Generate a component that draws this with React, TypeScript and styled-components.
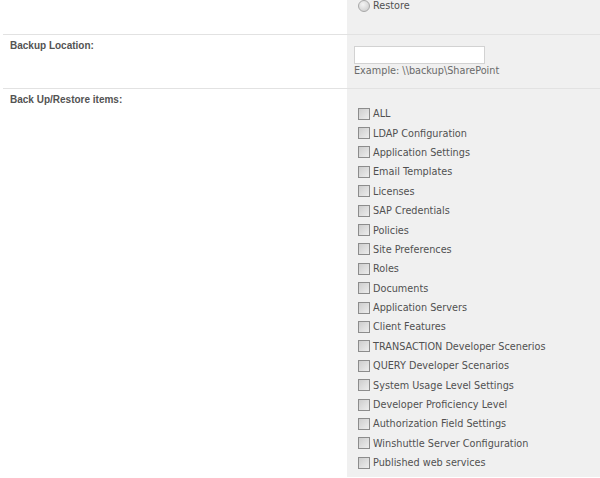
import styled, { createGlobalStyle } from "styled-components";

const ITEMS = [
  "ALL",
  "LDAP Configuration",
  "Application Settings",
  "Email Templates",
  "Licenses",
  "SAP Credentials",
  "Policies",
  "Site Preferences",
  "Roles",
  "Documents",
  "Application Servers",
  "Client Features",
  "TRANSACTION Developer Scenerios",
  "QUERY Developer Scenarios",
  "System Usage Level Settings",
  "Developer Proficiency Level",
  "Authorization Field Settings",
  "Winshuttle Server Configuration",
  "Published web services",
];

const GlobalStyle = createGlobalStyle`
  html, body {
    margin: 0;
    padding: 0;
    background: #fff;
  }
`;

const Page = styled.div`
  width: 600px;
  font-family: "DejaVu Sans", Verdana, sans-serif;
`;

const Section = styled.div<{ $first?: boolean }>`
  display: flex;
  margin-left: 3px;
  border-top: ${({ $first }) => ($first ? "none" : "1px solid #e2e2e2")};
`;

const LabelCell = styled.div`
  width: 344px;
  padding: 5px 0 0 7px;
  box-sizing: border-box;
  font-family: "Liberation Sans", Arial, sans-serif;
  font-size: 10px;
  font-weight: bold;
  color: #535353;
`;

const ValueCell = styled.div<{ $pad: string }>`
  flex: 1;
  background: #f0f0f0;
  padding: ${({ $pad }) => $pad};
  box-sizing: border-box;
`;

const OptionRow = styled.label`
  display: flex;
  align-items: center;
  height: 19.4px;
  font-size: 9.7px;
  color: #505050;
  white-space: nowrap;
`;

const RadioRow = styled(OptionRow)`
  height: 11px;
`;

const Radio = styled.span`
  width: 10px;
  height: 10px;
  border-radius: 50%;
  border: 1px solid #a8a8a8;
  background: radial-gradient(circle at 40% 35%, #f4f4f4, #c8c8c8);
  margin-right: 3px;
  flex: none;
`;

const Check = styled.span`
  width: 10px;
  height: 10px;
  border: 1px solid #8c8c8c;
  background: linear-gradient(135deg, #cdcdcd, #ededed);
  margin-right: 3px;
  flex: none;
`;

const TextBox = styled.input`
  display: block;
  width: 131px;
  height: 18px;
  box-sizing: border-box;
  border: 1px solid #d2d2d2;
  background: #fff;
  margin: 0;
`;

const Hint = styled.div`
  font-size: 9.7px;
  color: #6a6a6a;
  margin-top: 1px;
`;

export default function App() {
  return (
    <Page>
      <GlobalStyle />
      <Section $first>
        <LabelCell />
        <ValueCell $pad="0 0 23px 11px">
          <RadioRow>
            <Radio />
            Restore
          </RadioRow>
        </ValueCell>
      </Section>
      <Section>
        <LabelCell>Backup Location:</LabelCell>
        <ValueCell $pad="11px 0 12px 7px">
          <TextBox type="text" />
          <Hint>Example: \\backup\SharePoint</Hint>
        </ValueCell>
      </Section>
      <Section>
        <LabelCell>Back Up/Restore items:</LabelCell>
        <ValueCell $pad="15px 0 5px 11px">
          {ITEMS.map((item) => (
            <OptionRow key={item}>
              <Check />
              {item}
            </OptionRow>
          ))}
        </ValueCell>
      </Section>
    </Page>
  );
}
